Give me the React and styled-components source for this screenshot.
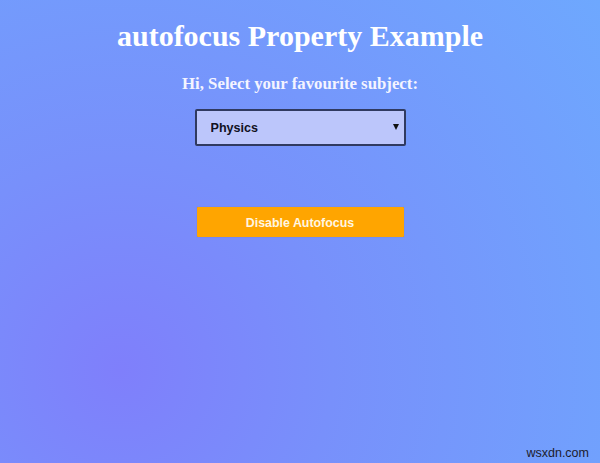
import React, { useState } from 'react';
import styled, { createGlobalStyle } from 'styled-components';

const GlobalStyle = createGlobalStyle`
  html, body {
    margin: 0;
    padding: 0;
  }
  body {
    font-family: "Liberation Serif", "Times New Roman", serif;
  }
`;

const Page = styled.div`
  position: relative;
  min-height: 100vh;
  box-sizing: border-box;
  padding-top: 19px;
  display: flex;
  flex-direction: column;
  align-items: center;
  background: radial-gradient(circle farthest-corner at 20% 80%, #7f7ffb 0%, #7890fb 35%, #6ea8fe 100%);
`;

const Title = styled.h1`
  margin: 0;
  font-family: "Liberation Serif", "Times New Roman", serif;
  font-size: 30px;
  line-height: 34px;
  font-weight: bold;
  color: #ffffff;
`;

const Subtitle = styled.h3`
  margin: 21px 0 0;
  font-family: "Liberation Serif", "Times New Roman", serif;
  font-size: 16.8px;
  line-height: 20px;
  font-weight: bold;
  color: #f4f4ff;
`;

const SelectWrap = styled.div`
  position: relative;
  margin-top: 15px;
  width: 211px;
  height: 37px;

  &::after {
    content: '';
    position: absolute;
    right: 7px;
    top: 15px;
    border-left: 3px solid transparent;
    border-right: 3px solid transparent;
    border-top: 6px solid #111;
    pointer-events: none;
  }
`;

const Select = styled.select`
  appearance: none;
  -webkit-appearance: none;
  width: 100%;
  height: 100%;
  box-sizing: border-box;
  border: 2px solid #303a60;
  border-radius: 2px;
  padding: 0 20px 0 14px;
  background: #bcc6fb;
  color: #111122;
  font-family: "Liberation Sans", Arial, sans-serif;
  font-size: 12.6px;
  font-weight: bold;
  outline: none;
`;

const Button = styled.button`
  margin-top: 61px;
  width: 207px;
  height: 30px;
  padding: 2px 0 0;
  border: none;
  border-radius: 1px;
  background: #ffa500;
  box-shadow: 0 0 1px rgba(90, 90, 120, 0.6);
  color: #fff6e2;
  font-family: "Liberation Sans", Arial, sans-serif;
  font-size: 12.4px;
  font-weight: bold;
  cursor: pointer;
`;

const Watermark = styled.span`
  position: absolute;
  right: 11px;
  bottom: 3px;
  font-family: "Liberation Sans", Arial, sans-serif;
  font-size: 12.5px;
  color: #1c1c2c;
`;

const App = () => {
  const [subject, setSubject] = useState('Physics');
  const [autofocus, setAutofocus] = useState(true);

  return (
    <Page>
      <GlobalStyle />
      <Title>autofocus Property Example</Title>
      <Subtitle>Hi, Select your favourite subject:</Subtitle>
      <SelectWrap>
        <Select value={subject} onChange={(e) => setSubject(e.target.value)} autoFocus={autofocus}>
          <option>Physics</option>
          <option>Chemistry</option>
          <option>Mathematics</option>
          <option>Biology</option>
        </Select>
      </SelectWrap>
      <Button type="button" onClick={() => setAutofocus(false)}>
        Disable Autofocus
      </Button>
      <Watermark>wsxdn.com</Watermark>
    </Page>
  );
};

export default App;
